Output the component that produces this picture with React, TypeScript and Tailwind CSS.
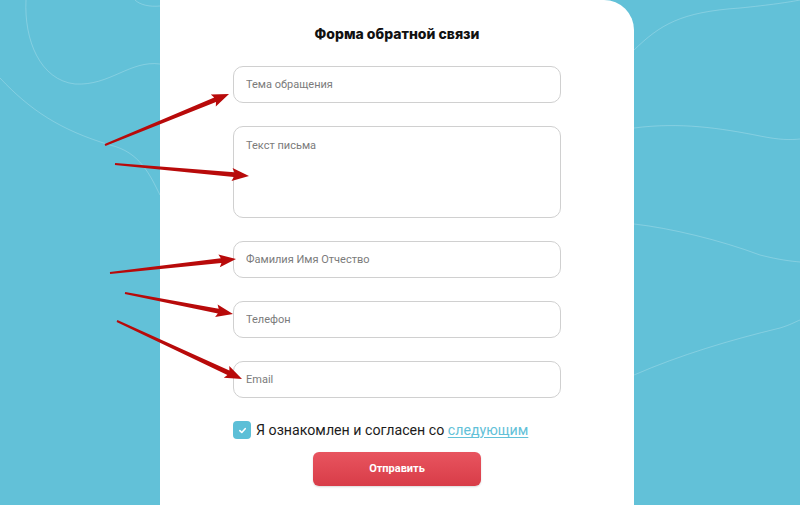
import React from 'react';

type Arrow = { x1: number; y1: number; x2: number; y2: number };

const arrows: Arrow[] = [
  { x1: 105, y1: 145, x2: 229, y2: 94 },
  { x1: 115, y1: 164, x2: 249, y2: 176 },
  { x1: 110, y1: 273, x2: 236, y2: 259 },
  { x1: 125, y1: 293, x2: 233, y2: 314 },
  { x1: 117, y1: 321, x2: 242, y2: 379 },
];

// tapered shaft + head, like the hand-drawn markup arrows
function arrowPoints(a: Arrow) {
  const dx = a.x2 - a.x1;
  const dy = a.y2 - a.y1;
  const len = Math.hypot(dx, dy);
  const ux = dx / len;
  const uy = dy / len;
  const nx = -uy;
  const ny = ux;
  const headLen = 15;
  const headW = 6.5;
  const bx = a.x2 - ux * headLen;
  const by = a.y2 - uy * headLen;
  const p = (x: number, y: number) => `${x.toFixed(1)},${y.toFixed(1)}`;
  return [
    p(a.x1 + nx * 1, a.y1 + ny * 1),
    p(bx + nx * 2.4, by + ny * 2.4),
    p(bx + nx * headW - ux * 2, by + ny * headW - uy * 2),
    p(a.x2, a.y2),
    p(bx - nx * headW - ux * 2, by - ny * headW - uy * 2),
    p(bx - nx * 2.4, by - ny * 2.4),
    p(a.x1 - nx * 1, a.y1 - ny * 1),
  ].join(' ');
}

const fieldCls =
  'w-full h-[37px] rounded-[10px] border-[1.5px] border-[#d0d0d0] bg-white px-[12px] text-[11px] text-[#333] outline-none placeholder:text-[#7b7b7b]';

export default function App() {
  return (
    <div
      className="relative w-full h-[505px] overflow-hidden bg-[#62c1d8]"
      style={{ fontFamily: 'Roboto, "Liberation Sans", sans-serif' }}
    >
      {/* background contour lines */}
      <svg className="absolute inset-0 pointer-events-none" width="800" height="505" viewBox="0 0 800 505">
        <g fill="none" stroke="#ffffff" strokeOpacity="0.22" strokeWidth="1">
          <path d="M26 0 C24 40 40 80 75 84 C110 86 130 60 160 64" />
          <path d="M0 78 C30 110 60 130 110 145 C140 152 150 175 160 195" />
          <path d="M135 0 C140 5 150 7 160 6" />
          <path d="M634 50 C660 25 680 12 740 8 C770 5 790 2 800 0" />
          <path d="M634 128 C680 122 720 128 760 136 C780 140 790 140 800 139" />
          <path d="M634 224 C670 228 720 240 760 255 C780 260 790 261 800 262" />
          <path d="M634 375 C680 355 730 340 780 328 C790 325 795 322 800 320" />
        </g>
      </svg>

      <div className="relative flex h-full pl-[160px]">
        <div className="w-[474px] h-full bg-white rounded-tr-[30px] flex flex-col items-center pt-[24px]">
          <h1
            className="text-[14px] leading-[20px] font-extrabold text-[#111]"
            style={{ fontFamily: 'Inter, Roboto, sans-serif' }}
          >
            Форма обратной связи
          </h1>

          <div className="w-[328px] mt-[22px] flex flex-col gap-[23px]">
            <input className={fieldCls} placeholder="Тема обращения" />
            <textarea
              className="w-full h-[92px] resize-none rounded-[10px] border-[1.5px] border-[#d0d0d0] bg-white px-[12px] pt-[11px] text-[11px] text-[#333] outline-none placeholder:text-[#7b7b7b]"
              placeholder="Текст письма"
            />
            <input className={fieldCls} placeholder="Фамилия Имя Отчество" />
            <input className={fieldCls} placeholder="Телефон" />
            <input className={fieldCls} placeholder="Email" />

            <label className="flex items-center gap-[5px] h-[18px]">
              <span className="w-[18px] h-[18px] rounded-[4px] bg-[#5cbfd7] flex items-center justify-center">
                <svg width="9" height="9" viewBox="0 0 10 10">
                  <path d="M2 5.2 L4.2 7.2 L8 3" fill="none" stroke="#fff" strokeWidth="1.8" strokeLinecap="round" strokeLinejoin="round" />
                </svg>
              </span>
              <span className="text-[14.2px] leading-[18px] text-[#1c1c1c]">
                Я ознакомлен и согласен со{' '}
                <a className="text-[#62c1d8] underline underline-offset-2">следующим</a>
              </span>
            </label>
          </div>

          <button className="mt-[13px] w-[168px] h-[34px] rounded-[6px] bg-gradient-to-b from-[#e8545f] to-[#d83c48] text-white text-[11px] font-bold shadow-[0_1px_2px_rgba(0,0,0,0.15)]">
            Отправить
          </button>
        </div>
      </div>

      {/* markup arrows */}
      <svg className="absolute inset-0 pointer-events-none" width="800" height="505" viewBox="0 0 800 505">
        {arrows.map((a, i) => (
          <polygon key={i} points={arrowPoints(a)} fill="#b80a0a" />
        ))}
      </svg>
    </div>
  );
}
